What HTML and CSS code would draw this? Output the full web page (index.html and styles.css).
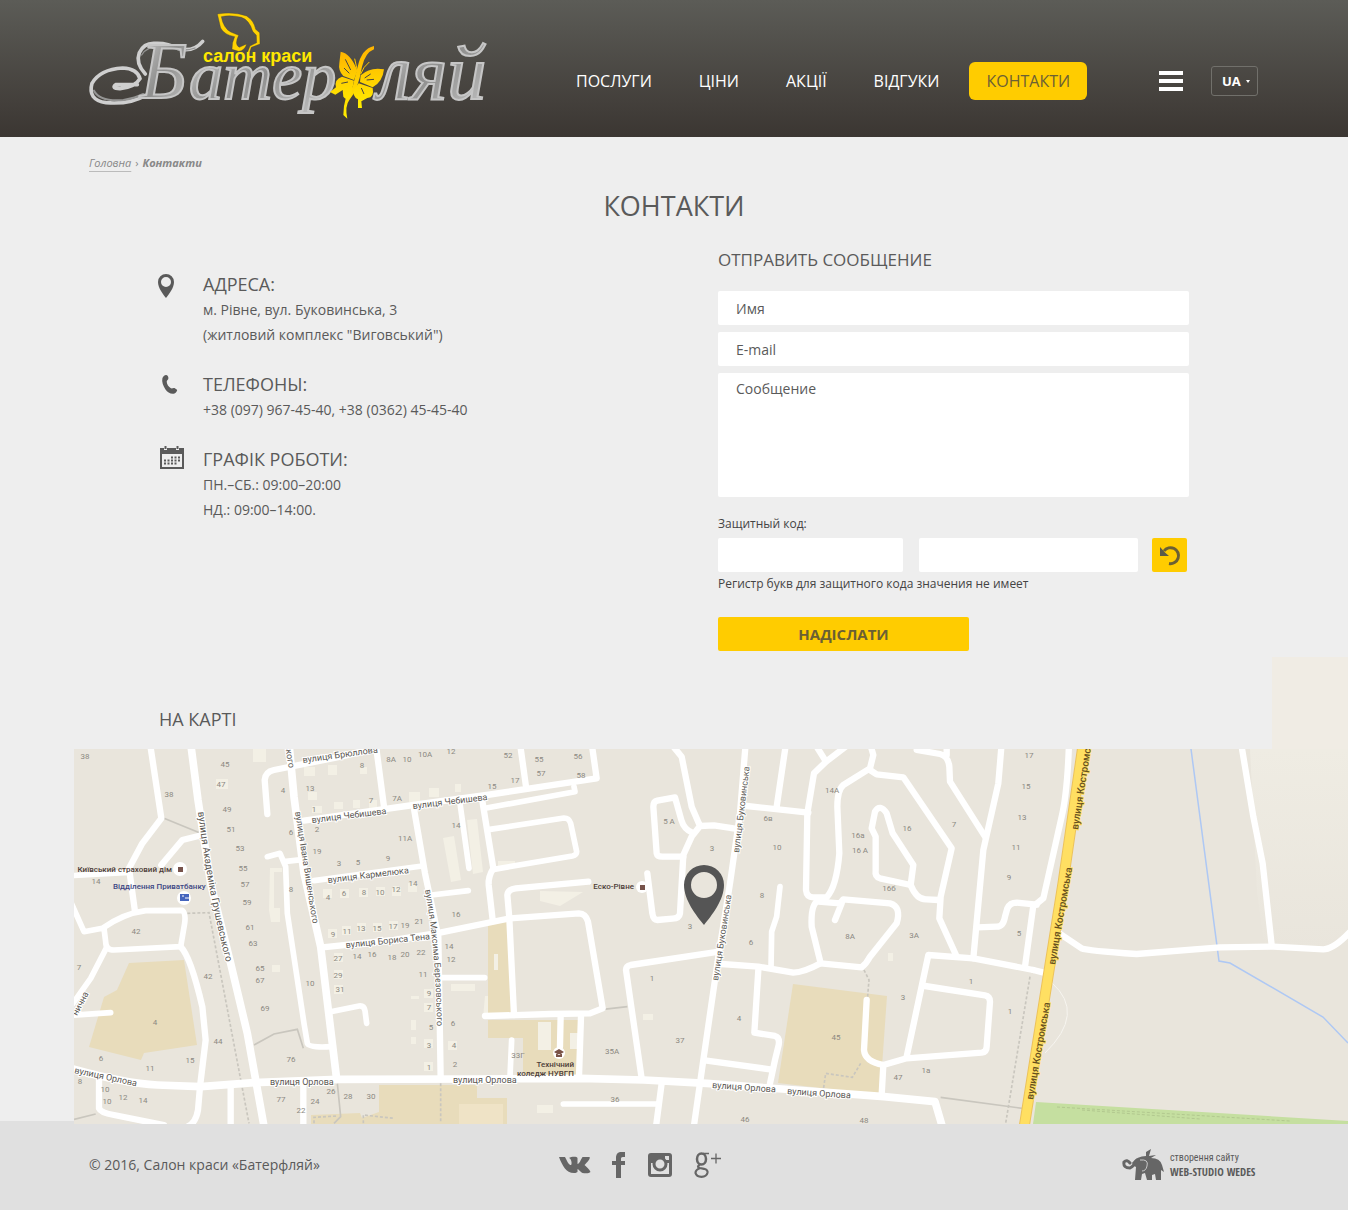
FILE: index.html
```html
<!DOCTYPE html>
<html lang="uk">
<head>
<meta charset="utf-8">
<meta name="viewport" content="width=device-width, initial-scale=1">
<title>Контакти — Салон краси «Батерфляй»</title>
<link rel="stylesheet" href="styles.css">
</head>
<body>
<header class="header">
  <div class="wrap header-row">
    <a class="logo" href="#" aria-label="Салон краси Батерфляй">
      <svg width="420" height="137" viewBox="0 0 420 137">
        <defs>
          <linearGradient id="silver" x1="0" y1="0" x2="1" y2="1">
            <stop offset="0" stop-color="#d2d2d2"/><stop offset=".5" stop-color="#8f8f8e"/><stop offset="1" stop-color="#c4c4c4"/>
          </linearGradient>
          <linearGradient id="gold" x1="0" y1="0" x2="0" y2="1">
            <stop offset="0" stop-color="#ffb400"/><stop offset="1" stop-color="#ffee00"/>
          </linearGradient>
        </defs>
        <g transform="scale(.33333)" fill="none" stroke-linecap="round">
          <path d="M172 254H108Q92 264 120 266Q165 262 180 236Q172 206 128 204Q60 208 36 250Q22 300 78 308Q150 314 196 286" stroke="#cfcfcf" stroke-width="11"/>
          <path d="M196 222Q166 190 178 158Q192 128 225 130Q262 128 295 146Q340 158 368 124" stroke="#cfcfcf" stroke-width="11"/>
          <path d="M42 272Q60 306 130 300Q166 294 190 282" stroke="#949493" stroke-width="6"/>
          <path d="M185 165Q205 132 262 140Q310 158 345 144" stroke="#949493" stroke-width="4"/>
        </g>
        <g class="logo-script">
          <text x="60" y="98" class="logo-cap">Б</text>
          <text x="109" y="99">атер</text>
          <text x="297" y="99" class="logo-end">ляй</text>
        </g>
        <g transform="scale(.33333)">
          <path d="M412 42Q460 34 500 48Q522 62 527 88L539 98L540 132L514 142L508 160L502 158L510 138L530 128L529 106L518 94Q508 60 484 52Q450 44 424 50Q430 84 452 96L476 106Q462 134 478 142L500 132Q494 152 476 154L456 148Q456 126 464 110Q432 104 422 84Z" fill="#ffd200" stroke="#3a3833" stroke-width="1"/>
          <path d="M882 138Q845 146 833 200L818 260Q790 290 790 345L802 356Q794 318 808 300Q834 270 846 200Q856 158 882 148Z" fill="url(#gold)"/>
          <path d="M782 155Q812 160 832 212L822 240L790 228Q774 212 778 190Z M822 242L786 230Q762 238 768 262L750 276L766 284L788 270L790 290Q800 304 812 290Z M842 226Q870 200 912 208Q908 246 878 262L840 246Z M836 250L878 264Q884 292 862 294L844 304L846 324L834 324V298Q816 290 822 268Z" fill="url(#gold)"/>
          <path d="M832 212L824 176M842 222Q850 200 868 186" stroke="#ffc800" stroke-width="3" fill="none"/>
          <path d="M796 178L812 210M792 204L808 220M784 250L804 246M872 222L854 234M882 238L860 240M852 282L844 264" stroke="#47443f" stroke-width="3"/>
        </g>
        <text x="123" y="62" class="logo-tag">салон краси</text>
      </svg>
    </a>
    <nav class="nav">
      <a href="#">ПОСЛУГИ</a>
      <a href="#">ЦІНИ</a>
      <a href="#">АКЦІЇ</a>
      <a href="#">ВІДГУКИ</a>
      <a href="#" class="active" aria-current="page">КОНТАКТИ</a>
    </nav>
    <div class="tools">
      <button class="burger" type="button" aria-label="Меню"><span></span><span></span><span></span></button>
      <div class="lang"><select aria-label="Мова"><option>UA</option><option>RU</option></select></div>
    </div>
  </div>
</header>

<main>
  <div class="wrap">
    <nav class="crumbs"><a href="#">Головна</a><span>›</span><strong>Контакти</strong></nav>
    <h1>КОНТАКТИ</h1>
    <div class="columns">
      <ul class="contacts">
        <li>
          <svg width="24" height="25" viewBox="0 0 24 25"><path fill="#5a5a5a" fill-rule="evenodd" d="M7 0a8 8 0 0 1 8 8c0 6-5 12-8 16C4 20-1 14-1 8a8 8 0 0 1 8-8zm0 3a5 5 0 1 0 0 10A5 5 0 0 0 7 3z"/></svg>
          <div><h2>АДРЕСА:</h2><p>м. Рівне, вул. Буковинська, 3</p><p>(житловий комплекс "Виговський")</p></div>
        </li>
        <li>
          <svg width="24" height="25" viewBox="0 0 24 25"><path fill="#5a5a5a" d="M7 1c1.500 0 2.500 1.600 2.400 3.200 0 1.500-1.600 1.900-1.700 3.300 0 2.600 1.900 5.600 4.300 6.800 1.300.5 2.200-.8 3.500-.2l2.500 1.700c.6.6-.8 3-2.500 3.800-3.500.9-7-1-9-4C4.300 12.200 2.500 8 3.400 4.300 4 2.500 5.500 1 7 1z"/></svg>
          <div><h2>ТЕЛЕФОНЫ:</h2><p>+38 (097) 967-45-40, +38 (0362) 45-45-40</p></div>
        </li>
        <li>
          <svg class="up" width="24" height="25" viewBox="0 0 24 25"><path fill="#5a5a5a" fill-rule="evenodd" d="M1 3h4v2h3V3h9v2h3V3h5v21H1zm2 6v13h20V9z"/><path d="M6.500 1v3M18.500 1v3" stroke="#5a5a5a" stroke-width="2"/><path d="M12 12.500h9M5 15.500h16M5 18.500h13" stroke="#5a5a5a" stroke-width="2" stroke-dasharray="2 1.500"/></svg>
          <div><h2>ГРАФІК РОБОТИ:</h2><p>ПН.–СБ.: 09:00–20:00</p><p>НД.: 09:00–14:00.</p></div>
        </li>
      </ul>
      <form class="form">
        <h2>ОТПРАВИТЬ СООБЩЕНИЕ</h2>
        <input type="text" placeholder="Имя" aria-label="Имя">
        <input type="email" placeholder="E-mail" aria-label="E-mail">
        <textarea placeholder="Сообщение" aria-label="Сообщение"></textarea>
        <label for="code">Защитный код:</label>
        <div class="captcha">
          <div class="captcha-image"></div>
          <input id="code" type="text">
          <button type="button" class="refresh" aria-label="Обновить код">
            <svg width="35" height="34" viewBox="0 0 35 34"><path d="M12 13A8 8 0 1 1 17 25.500" fill="none" stroke="#6b6034" stroke-width="3"/><path d="M8 9v9h9l-4-3.500z" fill="#5a5a4a"/></svg>
          </button>
        </div>
        <p class="note">Регистр букв для защитного кода значения не имеет</p>
        <button type="submit" class="send">НАДІСЛАТИ</button>
      </form>
    </div>
  </div>

  <section class="map">
    <div class="wrap"><h2>НА КАРТІ</h2></div>
    <svg class="map-canvas" viewBox="74 749 1274 375" role="img" aria-label="Карта">
      <defs>
        <linearGradient id="fade" x1="0" y1="0" x2="0" y2="1"><stop offset="0" stop-color="#efece3"/><stop offset="1" stop-color="#e9e5dc"/></linearGradient>
      </defs>
      <rect x="74" y="749" width="1274" height="375" fill="#e9e5dc"/>
      <path d="M1250 749h98v195l-30 8h-53l-8-60z" fill="url(#fade)"/>
      <g class="park">
        <path d="M129 963L184 960L197 1045L144 1053L141 1060L89 1047L104 997L117 990Z"/>
        <path d="M379 1085H477V1098H507V1124H311V1115L360 1113L362 1118L379 1112Z"/>
        <path d="M488 925L507 920L513 1013H488ZM488 1020H578V1077H523V1038H488Z"/>
        <path d="M793 984L887 996L880 1095L778 1083Z"/>
      </g>
      <path d="M1036 1102L1348 1121V1124H1033Z" fill="#c5dfa0"/>
      <path d="M1057 1107L1290 1121M1082 1110L1200 1119" stroke="#b2c88f" stroke-dasharray="3 2" fill="none"/>
      <g fill="#f3f0e5">
        <path d="M253 749h13v13h-13zM216 779h12v10h-12zM304 767h11v9h-11zM328 765h9v10h-9zM360 767h7v7h-7zM308 792h9v8h-9zM334 802h9v7h-9zM353 800h7v8h-7zM369 800h8v8h-8zM312 806h10v7h-10zM270 868h12v4h-8v36h6v14h-9l-2-12z"/>
        <path d="M443 838l11-2 7 44-10 2zM467 820l10-1 6 53-10 2zM409 792h11v10h-11zM429 788h10v9h-10zM455 784h6v8h-6zM540 891l43 1-23 14-20-5zM451 984h24v7h-24zM485 996h3v22h-5zM494 954h4v16h-4zM538 1022h13v28h-13zM570 1033h8v16h-8zM498 861h17v6l-17 2zM537 1105h16v8h-16zM643 1014h10v6h-10zM411 996h8v3h-8zM411 1020h5v10h-5zM411 1037h5v7h-5zM888 953h5v8h-5zM272 965h8v7h-8zM393 886h6v6h-6z"/>
        <path d="M459 1104h44v20h-44z" fill="#efe3c6"/>
        <path d="M323 889h9v9h-9zM340 889h9v9h-9zM359 888h9v9h-9zM376 887h9v9h-9zM392 887h9v9h-9zM408 883h9v9h-9zM328 929h9v9h-9zM342 926h9v9h-9zM357 923h9v9h-9zM373 923h9v9h-9zM389 921h9v9h-9zM334 953h9v9h-9zM334 970h9v9h-9zM334 985h9v9h-9zM424 989h9v9h-9zM424 1003h9v9h-9zM424 1039h9v9h-9zM424 1062h9v9h-9zM448 1041h9v9h-9z"/>
      </g>
      <g class="trail" transform="translate(74 740) scale(.33333)">
        <path d="M270 235L380 280" stroke-width="12"/>
        <path d="M540 915L600 882L670 868L688 925M790 1030L800 1130L780 1150M0 1138L65 1122"/>
        <path class="dots" d="M340 520L405 518L525 1150M720 1150V1132L790 1128M868 1150V1125L960 1135M1100 1030V1150"/>
        <path d="M1588 808L1660 800M2600 1072L2845 1105"/>
        <path class="dots" d="M2370 690L2385 720L2380 780M2360 970L2335 1012L2255 1000L2248 1050M2868 710L2795 1150"/>
      </g>
      <path d="M1191 749L1219 961L1230 963L1323 1017L1348 1043" fill="none" stroke="#aec8f4" stroke-width="1.500"/>
      <g class="roads" transform="translate(74 740) scale(.33333)">
        <path d="M228 10L262 235L205 310L165 385L183 515"/>
        <path class="big" d="M350 10L372 180L410 430L470 670L520 880L572 1170"/>
        <path d="M385 285L325 300L262 375"/>
        <path class="thin" d="M-10 407L165 397"/>
        <path class="thin" d="M-10 485L30 575L85 565Q150 520 215 512L325 511Q336 520 332 550L320 620L120 630Q95 630 95 605L90 565"/>
        <path class="thin" d="M98 622L50 715L-10 800M-10 826L110 818"/>
        <path d="M320 620Q350 650 385 800L395 900L378 1040L372 1110Q365 1150 340 1160"/>
        <path class="big" d="M-10 985Q150 1030 250 1035L380 1040L540 1028L790 1018L1200 1017L1518 1015L1710 1020L1898 1030L2430 1070L2583 1085L2605 1160"/>
        <path d="M75 1020V1105Q80 1118 120 1125L270 1155M470 1040V1170M688 1030V1170"/>
        <path d="M580 222L572 120Q574 95 600 90L800 50L905 25M905 10L930 200"/>
        <path class="big" d="M645 10L660 170L690 400L740 620L788 1018"/>
        <path class="thin" d="M580 350L618 340L635 380L640 520L690 850L700 910Q705 924 770 920M630 365L690 358"/>
        <path d="M690 242L1018 195L1238 165L1568 115L1553 10M1338 10L1356 140"/>
        <path class="thin" d="M720 422L1045 378M770 815L855 798Q870 796 873 812L878 850"/>
        <path d="M745 622L960 600L1098 578L1308 535L1515 520Q1535 520 1542 545L1586 805L1548 820L1430 822L1233 828"/>
        <path class="thin" d="M1233 205L1503 155L1500 140M1248 268L1470 234Q1485 234 1490 250L1508 335Q1508 345 1495 348L1260 388"/>
        <path d="M1223 170L1258 385Q1242 410 1244 435L1256 540"/>
        <path d="M1018 195L1053 400L1093 590L1100 1015"/>
        <path class="thin" d="M1073 465L1183 452M1158 190L1185 385M1098 713H1232M1313 900L1308 1010M1468 1092H1748"/>
        <path d="M1306 535L1300 465Q1302 448 1325 445L1543 425M1306 535L1320 825M1460 825L1458 920M1521 830L1515 1010"/>
        <path d="M1763 1030L1746 1160M1703 1015L1656 690Q1656 678 1670 675L1935 635"/>
        <path d="M1790 10L1823 50L1853 200L1878 258L1920 256L1998 268M1878 258L1853 290L1828 345L1818 520Q1816 535 1795 536L1750 540Q1738 540 1735 520L1720 400"/>
        <path d="M1855 278Q1830 268 1822 240L1803 172L1750 182Q1738 184 1738 200L1748 340Q1750 350 1765 350H1828"/>
      </g>
      <g class="roads" transform="translate(700 740) scale(.33333)">
        <path d="M137 10L120 220L90 430L55 650L10 960L-20 1170"/>
        <path d="M258 10L230 200M140 198L325 218"/>
        <path d="M350 20L378 65L450 10M378 65L342 100L322 220L318 450Q320 472 340 472H380Q410 440 418 340L412 200Q412 150 430 135L510 85L520 45L510 10"/>
        <path d="M510 90L530 103L610 112L755 325L722 470L718 535L768 645"/>
        <path d="M527 290L515 265L525 215Q540 190 560 220L578 280L640 375L632 435L540 415Q524 410 527 390Z"/>
        <path d="M632 435Q650 480 680 478L715 480"/>
        <path d="M350 485Q332 500 335 560L362 670L485 682Q500 670 510 650L590 550Q605 500 570 490L430 478L420 490L355 485M425 490L405 540"/>
        <path d="M65 672L175 680L280 698Q310 698 362 670"/>
        <path class="thin" d="M240 440L230 530L215 575L213 685"/>
        <path d="M175 690L163 878L225 888Q240 892 236 915L225 960L210 1030M20 962L210 988"/>
        <path d="M500 780L492 930Q495 965 550 975L620 955L845 938Q860 936 860 920L870 785Q870 768 855 766L675 738M550 975L545 1065"/>
        <path d="M620 950L685 645L820 655L1000 690"/>
        <path d="M905 10L895 130L850 330L820 655"/>
        <path d="M650 30L720 42Q745 48 748 80L750 125L855 290M740 10V45"/>
        <path d="M832 562L890 560Q910 560 915 530L922 505Q930 488 950 488L1010 494"/>
        <path d="M1107 10Q1102 160 1085 230L1030 475L1005 495M1000 496L975 680"/>
        <path d="M1000 690L1040 700"/>
        <path d="M1078 580L1145 625Q1160 632 1310 642L1560 622L1720 620L1870 628Q1900 628 1950 576"/>
        <path d="M1625 20L1660 230L1688 370L1715 615"/>
      </g>
      <path d="M1052 983Q1086 1013 1045 1053" fill="none" stroke="#f7f5f0"/>
      <path d="M1083 745L1063 883L1048 977L1024 1128" fill="none" stroke="#ecc25c" stroke-width="11"/>
      <path d="M1083 745L1063 883L1048 977L1024 1128" fill="none" stroke="#ffdf62" stroke-width="9"/>

      <g class="num">
        <text x="85" y="759">38</text><text x="169" y="797">38</text><text x="225" y="767">45</text><text x="221" y="787">47</text><text x="227" y="812">49</text><text x="231" y="832">51</text><text x="240" y="851">53</text><text x="243" y="871">55</text><text x="245" y="887">57</text><text x="247" y="905">59</text><text x="250" y="930">61</text><text x="253" y="946">63</text><text x="260" y="971">65</text><text x="260" y="983">67</text><text x="265" y="1011">69</text>
        <text x="96" y="884">14</text><text x="136" y="934">42</text><text x="79" y="970">7</text><text x="208" y="979">42</text><text x="155" y="1025">4</text><text x="101" y="1061">6</text><text x="150" y="1071">11</text><text x="190" y="1063">15</text><text x="218" y="1044">44</text><text x="80" y="1084">8</text><text x="105" y="1092">10</text><text x="107" y="1104">10</text><text x="123" y="1100">12</text><text x="143" y="1103">14</text>
        <text x="291" y="1062">76</text><text x="281" y="1102">77</text><text x="301" y="1113">22</text><text x="315" y="1104">24</text><text x="331" y="1094">26</text><text x="348" y="1099">28</text><text x="371" y="1099">30</text>
        <text x="283" y="793">4</text><text x="310" y="791">13</text><text x="314" y="812">1</text><text x="317" y="832">2</text><text x="317" y="854">19</text><text x="291" y="835">6</text><text x="291" y="892">8</text><text x="310" y="986">10</text><text x="362" y="768">8</text><text x="371" y="803">7</text><text x="339" y="866">3</text><text x="358" y="865">5</text><text x="388" y="861">9</text>
        <text x="328" y="900">4</text><text x="344" y="896">6</text><text x="364" y="895">8</text><text x="380" y="895">10</text><text x="396" y="892">12</text><text x="413" y="886">14</text><text x="333" y="937">9</text><text x="347" y="934">11</text><text x="361" y="931">13</text><text x="377" y="931">15</text><text x="393" y="929">17</text><text x="405" y="928">19</text><text x="419" y="924">21</text><text x="338" y="961">27</text><text x="357" y="959">14</text><text x="372" y="957">16</text><text x="392" y="960">18</text><text x="405" y="957">20</text><text x="421" y="955">22</text><text x="338" y="978">29</text><text x="340" y="992">31</text>
        <text x="391" y="762">8A</text><text x="407" y="762">10</text><text x="425" y="757">10А</text><text x="451" y="754">12</text><text x="508" y="758">52</text><text x="539" y="762">55</text><text x="578" y="759">56</text><text x="541" y="776">57</text><text x="581" y="778">58</text><text x="515" y="783">17</text><text x="492" y="789">15</text><text x="397" y="801">7А</text><text x="405" y="841">11А</text><text x="456" y="828">14</text><text x="456" y="917">16</text><text x="449" y="949">14</text><text x="451" y="962">12</text><text x="423" y="977">11</text><text x="429" y="996">9</text><text x="429" y="1010">7</text><text x="431" y="1030">5</text><text x="429" y="1048">3</text><text x="429" y="1070">1</text><text x="453" y="1026">6</text><text x="454" y="1048">4</text><text x="455" y="1067">2</text><text x="518" y="1058">33Г</text><text x="612" y="1054">35А</text><text x="680" y="1043">37</text><text x="615" y="1102">36</text><text x="652" y="981">1</text><text x="669" y="824">5 А</text><text x="690" y="929">3</text>
        <text x="712" y="851">3</text><text x="768" y="821">6в</text><text x="777" y="850">10</text><text x="762" y="898">8</text><text x="751" y="945">6</text><text x="739" y="1021">4</text><text x="832" y="793">14А</text><text x="858" y="838">16а</text><text x="860" y="853">16 А</text><text x="889" y="891">16б</text><text x="907" y="831">16</text><text x="954" y="827">7</text><text x="850" y="939">8А</text><text x="914" y="938">3А</text><text x="903" y="1000">3</text><text x="836" y="1040">45</text><text x="898" y="1080">47</text><text x="926" y="1073">1а</text><text x="971" y="984">1</text><text x="1010" y="1014">1</text><text x="745" y="1122">46</text><text x="864" y="1123">48</text><text x="1029" y="758">17</text><text x="1026" y="789">15</text><text x="1022" y="820">13</text><text x="1016" y="850">11</text><text x="1009" y="880">9</text><text x="1019" y="936">5</text>
      </g>
      <g class="street">
        <path id="s1" fill="none" d="M198 812Q206 884 228 970"/><text class="large"><textPath href="#s1">вулиця Академіка Грушевського</textPath></text>
        <text transform="translate(295 812) rotate(81)">вулиця Івана Вишенського</text>
        <text transform="translate(285 745) rotate(81)">ького</text>
        <text transform="translate(303 763) rotate(-8)">вулиця Брюллова</text>
        <text transform="translate(312 823) rotate(-7)">вулиця Чебишева</text>
        <text transform="translate(413 809) rotate(-7)">вулиця Чебишева</text>
        <text transform="translate(328 883) rotate(-7)">вулиця Кармелюка</text>
        <text transform="translate(346 948) rotate(-6)">вулиця Бориса Тена</text>
        <path id="s2" fill="none" d="M425 890Q436 950 437 1030"/><text><textPath href="#s2">вулиця Максима Березовського</textPath></text>
        <text transform="translate(74 1073) rotate(12)">вулиця Орлова</text>
        <text x="270" y="1085">вулиця Орлова</text>
        <text x="453" y="1083">вулиця Орлова</text>
        <text transform="translate(712 1088) rotate(4)">вулиця Орлова</text>
        <text transform="translate(787 1094) rotate(4)">вулиця Орлова</text>
        <text transform="translate(739 853) rotate(-83)">вулиця Буковинська</text>
        <text transform="translate(718 981) rotate(-81)">вулиця Буковинська</text>
        <text transform="translate(77 1016) rotate(-62)">нична</text>
        <g class="avenue">
          <text transform="translate(1078 830) rotate(-81)">вулиця Костромська</text>
          <text transform="translate(1055 965) rotate(-80)">вулиця Костромська</text>
          <text transform="translate(1033 1100) rotate(-80)">вулиця Костромська</text>
        </g>
      </g>
      <g fill="#fff"><circle cx="180" cy="869" r="7"/><circle cx="184" cy="898" r="7"/><circle cx="642" cy="887" r="6"/><circle cx="559" cy="1053" r="6"/></g>
      <path d="M178 867h5v5h-5zM640 885h5v5h-5z" fill="#77534b"/>
      <path d="M180 894h9v7h-9z" fill="#4565bd"/><path d="M182 896h2m1 2h4" stroke="#fff"/>
      <path d="M554 1052l5-3 5 3-5 3zM556 1054v3h6v-3" fill="#7a5347"/>
      <g class="place">
        <text x="172" y="872" text-anchor="end">Київський страховий дім</text>
        <text x="113" y="889" class="bank">Відділення Приватбанку</text>
        <text x="634" y="889" text-anchor="end">Еско-Рівне</text>
        <text x="574" y="1067" text-anchor="end">Технічний</text>
        <text x="574" y="1076" text-anchor="end">коледж НУВГП</text>
      </g>
      <path fill="#555" fill-rule="evenodd" d="M704 865a20 20 0 0 1 20 20c0 15-12 30-20 40-8-10-20-25-20-40a20 20 0 0 1 20-20zm0 7a13 13 0 1 0 0 26 13 13 0 0 0 0-26z"/>
    </svg>
  </section>
</main>

<footer class="footer">
  <div class="wrap footer-row">
    <p>© 2016, Салон краси «Батерфляй»</p>
    <div class="social">
      <a href="#" aria-label="VK"><svg width="32" height="28" viewBox="0 0 32 28"><path fill="#666" d="M0 6h6c3 6 4 8 6 8 1 0 1-6-2-7 2-1.500 8-2 8.500 0v6c2 0 3-4 5-7h7c1.500 1.500-3 6-5 8 2 2 5 4 6 7-2 2-6 1-8 1-2-1-4-4-5-4v3l-2 1c-9 1-13-7-16.500-16z"/></svg></a>
      <a href="#" aria-label="Facebook"><svg width="14" height="28" viewBox="0 0 14 28"><path fill="#666" d="M4 27V14H0v-4h4V7c0-4 2-6 5-6h4v5h-2c-2 0-2 1-2 2v2h4v4H9v13z"/></svg></a>
      <a href="#" aria-label="Instagram"><svg width="26" height="28" viewBox="0 0 26 28"><rect x="1" y="2" width="24" height="24" rx="3" fill="#666"/><path d="M4 12h4a6 6 0 0 0 10 0h4v11H4z" fill="#e0e0e0"/><path d="M18 5h4v4h-4z" fill="#e0e0e0"/><circle cx="13" cy="13" r="6" fill="#e0e0e0" stroke="#666" stroke-width="3"/></svg></a>
      <a href="#" aria-label="Google+"><svg width="28" height="28" viewBox="0 0 28 28"><g fill="none" stroke="#666"><ellipse cx="7.500" cy="8" rx="4.500" ry="5.500" stroke-width="2.500"/><path d="M9 2.500h6" stroke-width="1.500"/><path d="M6 13.500q-4 2.500 0 3.500l4 .8q4 1 3.500 4-1 4-6 4T1.500 22q0-3.500 5-5" stroke-width="2.200"/><path d="M17 7.500h10M22 2.500v10" stroke-width="1.300"/></g></svg></a>
    </div>
    <a class="studio" href="#">
      <svg width="42" height="34" viewBox="0 0 42 34"><path d="M8 15Q5 11 2 14Q1 20 8 20Q12 18 15 12" fill="none" stroke="#666" stroke-width="3" stroke-linecap="round"/><path fill="#666" d="M10 15Q15 8 24 8V4l5-3-2 7 7-1-5 3Q38 10 40 17l2 7-3-2v10h-5l-1-6-3 1v5h-5l-2-7-3 1-1 6h-6l1-13q-4-2-4-5z"/><path d="M18 12q9-1 7 6-1 5-5 5" fill="none" stroke="#c8c8c8"/></svg>
      <span>створення сайту<strong>WEB-STUDIO WEDES</strong></span>
    </a>
  </div>
</footer>
</body>
</html>
```
FILE: styles.css
```css
* { box-sizing: border-box; }

body {
  margin: 0;
  background: #eee;
  color: #5a5a5a;
  font: 14px/25px "Open Sans", "Noto Sans", sans-serif;
}

h1, h2, p, ul { margin: 0; padding: 0; font-weight: 400; }
ul { list-style: none; }
h2 { font-size: 18px; line-height: 26px; }
svg { display: block; flex: none; }
a { color: inherit; text-decoration: none; }
button, input, textarea, select { font: inherit; color: inherit; border: 0; border-radius: 2px; }
button { cursor: pointer; padding: 0; }

.wrap { max-width: 1170px; margin: 0 auto; }

/* Header */
.header { background: linear-gradient(#5c5c57, #3b3632); color: #fff; }
.header-row { display: flex; align-items: center; padding-right: 1px; }
.logo { margin-left: -9px; }
.logo-script text {
  font: italic 68px "Liberation Serif", serif;
  fill: url(#silver);
  stroke: #c6c6c6;
  stroke-width: 2px;
}
.logo-script .logo-cap { font-size: 80px; }
.logo-script .logo-end { font-size: 78px; }
.logo-tag { font: 700 18px "Liberation Sans", sans-serif; fill: #ffe800; }

.nav { display: flex; gap: 13px; margin-left: 59px; padding-top: 25px; }
.nav a { padding: 0 17px; border-radius: 6px; font-size: 16px; font-weight: 500; line-height: 38px; }
.nav .active { background: #fc0; color: #6b6034; font-weight: 400; }

.tools { display: flex; align-items: center; gap: 28px; margin-left: auto; padding-top: 25px; }
.burger { display: grid; gap: 4px; width: 24px; background: none; }
.burger span { height: 4px; background: #fff; }
.lang { position: relative; }
.lang select {
  appearance: none;
  width: 47px;
  height: 30px;
  padding: 0 10px;
  background: transparent;
  border: 1px solid #71706b;
  border-radius: 3px;
  font-size: 13px;
  font-weight: 700;
}
.lang::after {
  content: "";
  position: absolute;
  right: 8px;
  top: 14px;
  border: 2px solid transparent;
  border-top: 3px solid #fff;
  pointer-events: none;
}

/* Page content */
.crumbs { display: flex; gap: 4px; padding-top: 16px; font-size: 11px; line-height: 20px; font-style: italic; color: #888; }
.crumbs a { text-decoration: underline; text-decoration-color: #bbb; text-underline-offset: 4px; }
.crumbs span { font-style: normal; }
h1 { padding: 13px 0 21px; font-size: 27px; line-height: 40px; text-align: center; }
.columns { display: grid; grid-template-columns: 1fr 471px; padding: 0 70px; }
.contacts { display: grid; gap: 24px; align-content: start; padding-top: 24px; }
.contacts li { display: flex; gap: 20px; align-items: flex-start; }
.contacts svg { width: 24px; height: 25px; margin-top: 3px; overflow: visible; }
.contacts .up { margin-top: -1px; }

.form { display: grid; gap: 7px; }
.form h2 { margin-bottom: 11px; font-size: 17px; }
.form input, .form textarea { width: 100%; height: 34px; padding: 0 18px; background: #fff; }
.form textarea { display: block; height: 124px; padding-top: 3px; resize: none; }
.form ::placeholder { color: #5a5a5a; opacity: 1; }
.form label { margin-top: 6px; font-size: 12px; line-height: 28px; color: #444; margin-bottom: -7px; }
.captcha { display: flex; }
.captcha-image { width: 185px; background: #fff; border-radius: 2px; margin-right: 16px; }
.captcha input { width: 219px; }
.refresh { background: #fc0; margin-left: 14px; }
.note { margin-top: -7px; font-size: 12px; line-height: 24px; color: #444; }
.send { width: 251px; height: 34px; margin-top: 14px; background: #fc0; color: #6b6034; font-size: 15px; font-weight: 700; }

/* Map */
.map { position: relative; margin-top: 6px; padding-top: 49px; }
.map::before { content: ""; position: absolute; top: 0; right: 0; width: 76px; height: 92px; background: #f0ece4; }
.map h2 { padding-left: 70px; margin-bottom: 17px; }
.map-canvas { position: relative; width: calc(100% - 74px); height: auto; margin: 0 0 -3px 74px; }
.park { fill: #e8dcbb; }
.roads path { fill: none; stroke: #fff; stroke-width: 19px; stroke-linejoin: round; stroke-linecap: round; }
.roads .big { stroke-width: 23px; }
.roads .thin { stroke-width: 17px; }
.trail path { fill: none; stroke: #c9c6be; stroke-width: 5px; }
.trail .dots { stroke-dasharray: 9 6; }
.num { font: 8px Roboto, sans-serif; fill: #8c8982; text-anchor: middle; }
.street { font: 9px Roboto, sans-serif; fill: #5b5853; stroke: #fff; stroke-width: 2px; paint-order: stroke; }
.street path { stroke: none; }
.street .large { font-size: 10px; }
.avenue { font-size: 10px; font-weight: 500; fill: #66501e; stroke: #ffdf62; }
.place { font: 500 8px Roboto, sans-serif; fill: #4d3d39; }
.place .bank { fill: #3c4784; }

/* Footer */
.footer { background: #e0e0e0; }
.footer-row { display: grid; grid-template-columns: 470px 1fr auto; align-items: center; height: 89px; padding-bottom: 2px; }
.social { display: flex; align-items: center; gap: 21px; }
.studio { display: flex; align-items: center; gap: 6px; font: 10px/14px "Roboto Condensed", Roboto, sans-serif; }
.studio span { width: 89px; }
.studio strong { display: block; font-size: 11px; font-family: "Open Sans Condensed", "Roboto Condensed", sans-serif; }
```
